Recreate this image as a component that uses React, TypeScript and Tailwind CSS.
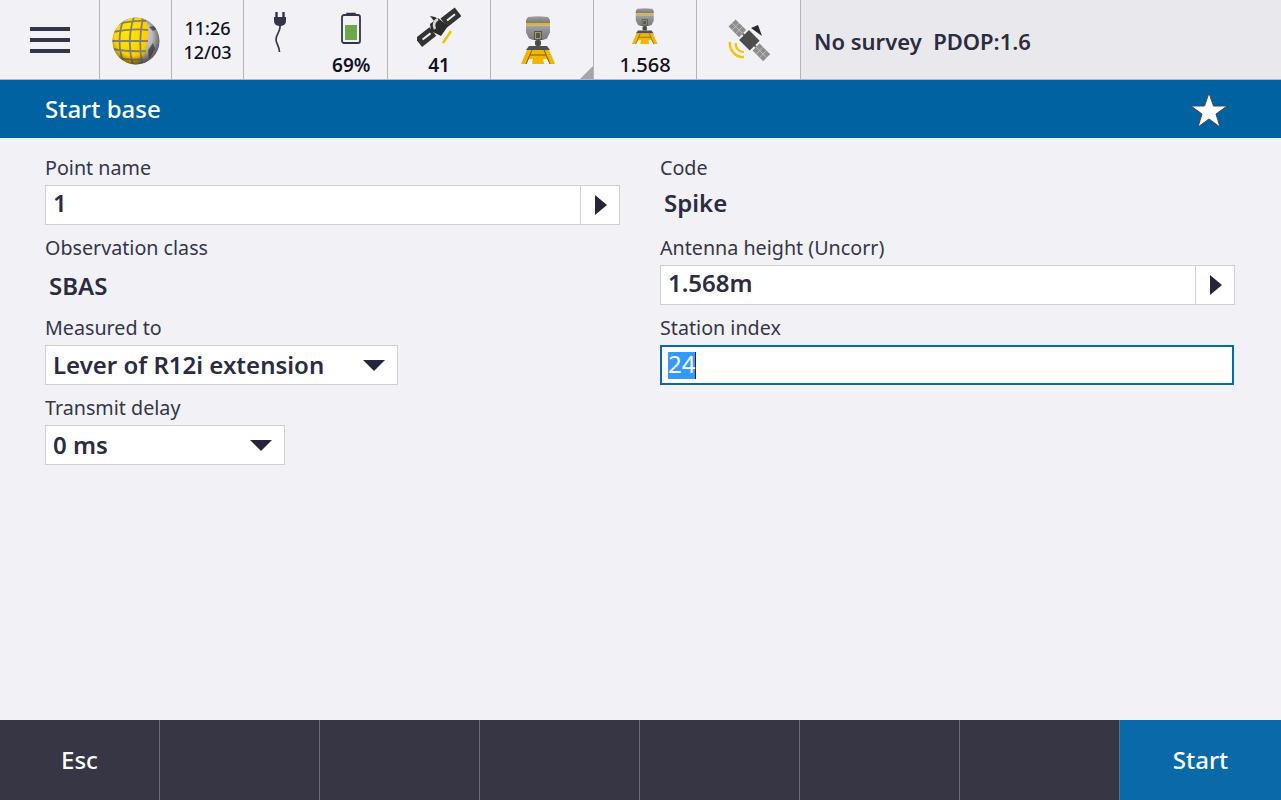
import React from "react";

function Globe() {
  return (
    <svg width="48" height="48" viewBox="0 0 48 48">
      <defs>
        <radialGradient id="gg" cx="0.6" cy="0.35" r="0.75">
          <stop offset="0" stopColor="#d4d4d4" />
          <stop offset="0.7" stopColor="#a2a2a2" />
          <stop offset="1" stopColor="#707070" />
        </radialGradient>
        <radialGradient id="gy" cx="0.45" cy="0.3" r="0.8">
          <stop offset="0" stopColor="#ffe800" />
          <stop offset="0.65" stopColor="#fcd000" />
          <stop offset="1" stopColor="#c09400" />
        </radialGradient>
        <radialGradient id="gs" cx="0.45" cy="0.42" r="0.55">
          <stop offset="0.7" stopColor="#000" stopOpacity="0" />
          <stop offset="1" stopColor="#000" stopOpacity="0.4" />
        </radialGradient>
        <clipPath id="gc"><circle cx="24" cy="24" r="23.5" /></clipPath>
      </defs>
      <circle cx="24" cy="24" r="23.5" fill="url(#gg)" />
      <g clipPath="url(#gc)">
        <path d="M30 0C10 0 0 11 0 24s10 24 24 24c5-5 9-8 10-14 1-6 0-12 2-17 1-6-1-14-6-17z" fill="url(#gy)" />
        <g fill="none" stroke="#85806c" strokeWidth="1.800">
          <path d="M2 8 Q20 3 34 4M0 15 Q20 11 36 13M-1 24 H36M0 32 Q18 35 34 34M3 40 Q18 44 31 42" />
          <path d="M12 1 Q3 24 12 47M22 0 Q14 24 21 48M31 0 Q26 24 30 46" />
        </g>
        <path d="M37 10l5-1 3 3-4 2zM36 33l5-7 2 6-6 10z" fill="#5e5e5e" />
        <circle cx="24" cy="24" r="24" fill="url(#gs)" />
      </g>
    </svg>
  );
}

function Plug() {
  return (
    <svg width="14" height="42" viewBox="0 0 14 42">
      <path d="M3.500 1v5M10.500 1v5" stroke="#34344a" strokeWidth="2.400" fill="none" />
      <path d="M1 6h12v4a5 5 0 0 1-5 5H6a5 5 0 0 1-5-5z" fill="#34344a" />
      <path d="M7 14c1 6-4.500 10-4 15 .3 4 3.500 6 3.500 12" stroke="#34344a" strokeWidth="1.700" fill="none" />
    </svg>
  );
}

function Battery() {
  return (
    <svg width="20" height="32" viewBox="0 0 20 32">
      <path d="M6 3V1.500h8V3" stroke="#34344a" strokeWidth="1.500" fill="none" />
      <rect x="1" y="3" width="18" height="28" rx="2" fill="none" stroke="#34344a" strokeWidth="1.800" />
      <rect x="4" y="13" width="12" height="15" fill="#6ea84a" />
    </svg>
  );
}

function Satellite() {
  return (
    <svg width="44" height="44" viewBox="0 0 44 44">
      <g transform="rotate(-38 22 22)">
        <rect x="-3" y="15.500" width="18" height="11" fill="#333" />
        <rect x="2" y="20" width="10" height="2" fill="#eee" />
        <rect x="29" y="15.500" width="18" height="11" fill="#333" />
        <rect x="33" y="20" width="10" height="2" fill="#eee" />
      </g>
      <path d="M13 18l8-6 10 8-7 10-10-5z" fill="#2c2c2c" />
      <path d="M17 15l-4-5 5 1 3 2z" fill="#2c2c2c" />
      <path d="M21 13a7 7 0 0 0-3 10" stroke="#d8d8d8" strokeWidth="2.600" fill="none" />
      <path d="M34 25l-8 12" stroke="#f2c200" strokeWidth="2.400" />
    </svg>
  );
}

function Rover({ scale = 1 }: { scale?: number }) {
  return (
    <svg width={34 * scale} height={48 * scale} viewBox="0 0 34 48" className="block">
      <defs>
        <linearGradient id="rg" x1="0" x2="0" y1="0" y2="1">
          <stop offset="0" stopColor="#a6a6a6" />
          <stop offset="0.35" stopColor="#909090" />
          <stop offset="1" stopColor="#7c7c7c" />
        </linearGradient>
      </defs>
      <path d="M7 1q10-1.500 20 0l2 3v3H5V4z" fill="url(#rg)" />
      <rect x="5" y="7" width="24" height="2.500" fill="#dcb32a" />
      <path d="M5 9.500h24v7l-3 6-4 1.500H12l-4-1.500-3-6z" fill="url(#rg)" />
      <rect x="13" y="15" width="8" height="9" fill="#555" />
      <rect x="14.500" y="16.500" width="5" height="6" fill="none" stroke="#b9b24a" strokeWidth="0.800" />
      <rect x="14" y="24" width="6" height="6" rx="2" fill="#4a4a4a" />
      <path d="M8 30h18l3 4H5z" fill="#505050" />
      <path d="M6 34h22l6 14h-5l-3-5H22l1 5H11l1-5H8l-3 5H0z" fill="#f2b600" />
      <path d="M11 34l-6 14M23 34l6 14M9 39h16" stroke="#7c6010" strokeWidth="1" />
    </svg>
  );
}

function Sat2() {
  return (
    <svg width="42" height="42" viewBox="0 0 42 42">
      <g transform="rotate(45 21 21)">
        <rect x="-3" y="16" width="15" height="10" fill="#8e8e8e" />
        <path d="M2 16v10M7 16v10M-3 21h15" stroke="#c4c4c4" strokeWidth="0.800" />
        <rect x="31" y="16" width="15" height="10" fill="#8e8e8e" />
        <path d="M36 16v10M41 16v10M31 21h15" stroke="#c4c4c4" strokeWidth="0.800" />
        <path d="M12 20h19v2H12z" fill="#666" />
        <rect x="14" y="14" width="15" height="14" fill="#4c4c4c" />
      </g>
      <path d="M23 9l7-3 4 11z" fill="#2a2a2a" />
      <path d="M2 23c-1 8 6 16 14 15" stroke="#f5c400" strokeWidth="2.400" fill="none" />
      <path d="M8 24c-1 5 3 9 8 9" stroke="#f5c400" strokeWidth="2.200" fill="none" />
    </svg>
  );
}

function Cell({ w, children, className = "" }: { w: string; children?: React.ReactNode; className?: string }) {
  return <div className={`${w} relative h-full shrink-0 border-r border-[#b4b4ba] ${className}`}>{children}</div>;
}

function Label({ children }: { children: React.ReactNode }) {
  return <div className="h-[31px] text-[19.7px] leading-[27px] text-[#36364a]">{children}</div>;
}

function Caret() {
  return (
    <svg width="12" height="20" viewBox="0 0 12 20"><path d="M0 0l12 10L0 20z" fill="#26263a" /></svg>
  );
}

function Picker({ value }: { value: string }) {
  return (
    <div className="flex h-[40px] w-full items-stretch border border-[#d0d0d4] bg-white">
      <div className="flex-1 pl-[7px] text-[24px] leading-[34px] font-semibold text-[#2c2c40]">{value}</div>
      <div className="flex w-[39px] items-center justify-center border-l border-[#d0d0d4] pl-[1px]"><Caret /></div>
    </div>
  );
}

function Select({ value, w }: { value: string; w: string }) {
  return (
    <div className={`flex h-[40px] ${w} items-center justify-between border border-[#d0d0d4] bg-white pl-[7px] pr-[12px]`}>
      <span className="text-[24px] leading-[40px] font-semibold text-[#2c2c40]">{value}</span>
      <svg width="22" height="11" viewBox="0 0 22 11"><path d="M0 0h22L11 11z" fill="#26263a" /></svg>
    </div>
  );
}

function Static({ value, leading }: { value: string; leading: string }) {
  return <div className={`h-[40px] pl-[4px] text-[24px] font-semibold text-[#2c2c40] ${leading}`}>{value}</div>;
}

export default function App() {
  const foot = ["Esc", "", "", "", "", "", ""];
  return (
    <div className="flex h-[800px] w-[1281px] flex-col overflow-hidden bg-[#f1f1f6]" style={{ fontFamily: '"Noto Sans", sans-serif' }}>
      <div className="flex h-[80px] shrink-0 items-stretch border-b border-[#b4b4ba] bg-[#f1f1f6]">
        <Cell w="w-[100px]">
          <div className="flex h-full flex-col items-center justify-center gap-[7px]">
            <div className="h-[4px] w-[40px] bg-[#34344a]" />
            <div className="h-[4px] w-[40px] bg-[#34344a]" />
            <div className="h-[4px] w-[40px] bg-[#34344a]" />
          </div>
        </Cell>
        <Cell w="w-[72px]"><div className="flex h-full items-center justify-center pt-[3px]"><Globe /></div></Cell>
        <Cell w="w-[72px]">
          <div className="flex h-full flex-col items-center justify-center pt-[1px] text-[18px] leading-[24px] font-medium text-[#111122]">
            <span>11:26</span><span>12/03</span>
          </div>
        </Cell>
        <Cell w="w-[144px]">
          <div className="flex h-full">
            <div className="flex w-[72px] justify-center pt-[11px]"><Plug /></div>
            <div className="flex w-[72px] flex-col items-center pt-[12px]">
              <Battery />
              <span className="mt-[9px] text-[19px] leading-[25px] font-semibold text-[#111122]">69%</span>
            </div>
          </div>
        </Cell>
        <Cell w="w-[103px]">
          <div className="flex h-full flex-col items-center pt-[6px]">
            <Satellite />
            <span className="mt-[3px] text-[19px] leading-[25px] font-semibold text-[#111122]">41</span>
          </div>
        </Cell>
        <Cell w="w-[103px]">
          <div className="flex h-full justify-center pt-[16px] pr-[8px]"><Rover /></div>
          <div className="absolute right-0 bottom-0 h-0 w-0 border-b-[13px] border-l-[13px] border-b-[#a4a4aa] border-l-transparent" />
        </Cell>
        <Cell w="w-[103px]">
          <div className="flex h-full flex-col items-center pt-[8px]">
            <Rover scale={0.75} />
            <span className="mt-[8px] text-[20px] leading-[25px] font-medium text-[#111122]">1.568</span>
          </div>
        </Cell>
        <Cell w="w-[104px]"><div className="flex h-full items-center justify-center"><Sat2 /></div></Cell>
        <div className="flex flex-1 items-center bg-[#e9e9ed] pt-[3px] pl-[13px] text-[22px] font-semibold whitespace-pre text-[#2c2c40]">
          No survey  PDOP:1.6
        </div>
      </div>

      <div className="flex h-[58px] shrink-0 items-center justify-between bg-[#0062a1] pr-[53px] pl-[45px]">
        <span className="text-[24px] font-medium text-white">Start base</span>
        <svg width="38" height="36" viewBox="0 0 38 36" className="mt-[2px]">
          <path d="M19 1l4.500 13h13.500L26 22l4 13-11-8-11 8 4-13L1 14h13.500z" fill="#fff" stroke="#3f4a5e" strokeWidth="1" />
        </svg>
      </div>

      <div className="grid flex-1 grid-cols-[575px_575px] content-start gap-x-[40px] pt-[16px] pl-[45px]">
        <div className="flex flex-col gap-[9px]">
          <div className="flex flex-col"><Label>Point name</Label><Picker value="1" /></div>
          <div className="flex flex-col"><Label>Observation class</Label><Static value="SBAS" leading="leading-[42px]" /></div>
          <div className="flex flex-col"><Label>Measured to</Label><Select value="Lever of R12i extension" w="w-[353px]" /></div>
          <div className="flex flex-col"><Label>Transmit delay</Label><Select value="0 ms" w="w-[240px]" /></div>
        </div>
        <div className="flex flex-col gap-[9px]">
          <div className="flex flex-col"><Label>Code</Label><Static value="Spike" leading="leading-[36px]" /></div>
          <div className="flex flex-col"><Label>Antenna height (Uncorr)</Label><Picker value="1.568m" /></div>
          <div className="flex flex-col">
            <Label>Station index</Label>
            <div className="flex h-[40px] w-[574px] items-start border-2 border-[#0a69a8] bg-white pt-[5px] pl-[6px]">
              <span className="inline-block h-[27px] border-r border-[#26263a] bg-[#3399ff] text-[24px] leading-[24px] text-white">24</span>
            </div>
          </div>
        </div>
      </div>

      <div className="flex h-[80px] shrink-0 bg-[#363645]">
        {foot.map((t, i) => (
          <div key={i} className="flex w-[160px] items-center justify-center border-r border-[#6a6a78] text-[24px] font-medium text-white">{t}</div>
        ))}
        <div className="flex flex-1 items-center justify-center bg-[#0a69a8] text-[24px] font-medium text-white">Start</div>
      </div>
    </div>
  );
}
